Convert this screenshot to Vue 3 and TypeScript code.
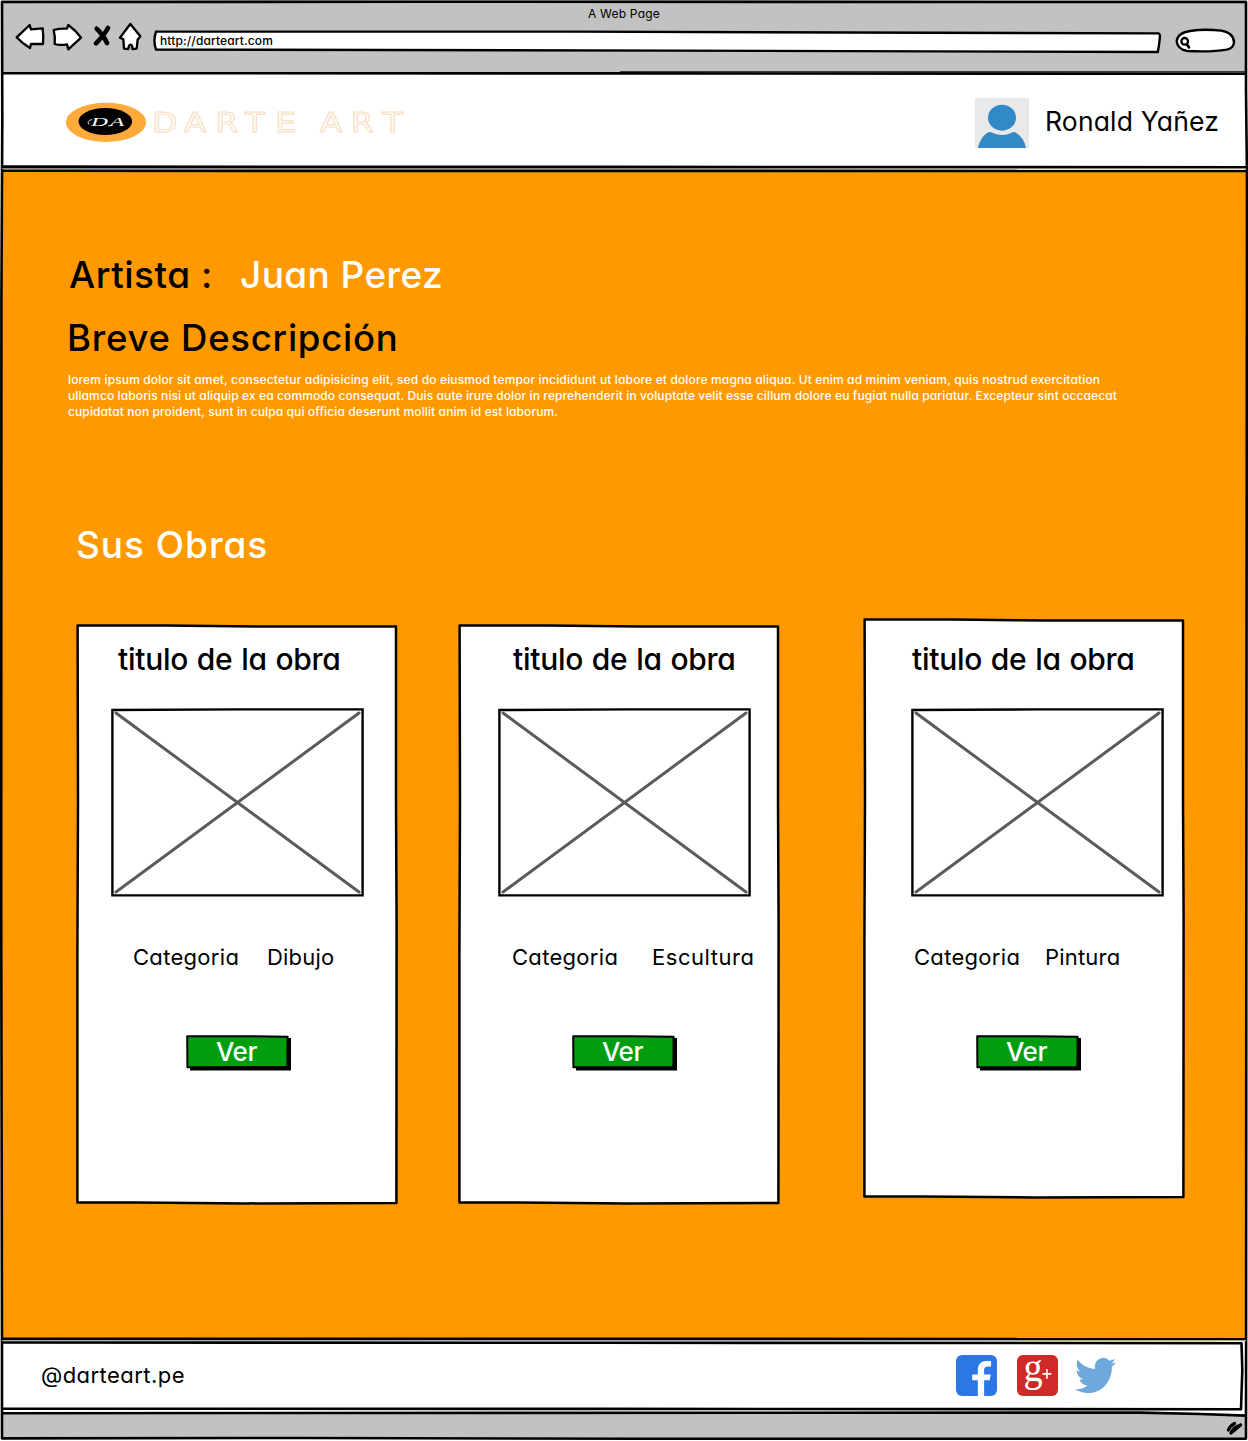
<script setup lang="ts">
interface Work {
  id: string
  title: string
  category: string
}

const user = 'Ronald Yañez'
const artist = 'Juan Perez'

const description: string[] = [
  'lorem ipsum dolor sit amet, consectetur adipisicing elit, sed do eiusmod tempor incididunt ut labore et dolore magna aliqua. Ut enim ad minim veniam, quis nostrud exercitation',
  'ullamco laboris nisi ut aliquip ex ea commodo consequat. Duis aute irure dolor in reprehenderit in voluptate velit esse cillum dolore eu fugiat nulla pariatur. Excepteur sint occaecat',
  'cupidatat non proident, sunt in culpa qui officia deserunt mollit anim id est laborum.',
]

const works: Work[] = [
  { id: 'drawing', title: 'titulo de la obra', category: 'Dibujo' },
  { id: 'sculpture', title: 'titulo de la obra', category: 'Escultura' },
  { id: 'painting', title: 'titulo de la obra', category: 'Pintura' },
]
</script>

<template>
  <div class="window">
    <div class="toolbar">
      <div class="window-title">A Web Page</div>
      <div class="controls">
        <svg class="nav" width="130" height="32" viewBox="0 0 390 96">
          <g fill="#fff" stroke="#000" stroke-width="7" stroke-linejoin="round">
            <path d="M8 46 L47 9 L51 22 L86 19 Q89 43 87 66 L51 66 L48 78 Q26 66 8 46Z" />
            <path d="M119 24 Q137 19 159 20 L163 9 Q185 25 201 47 L163 82 L159 67 Q138 71 122 66 Q124 43 119 24Z" />
            <path d="M349 6 L379 43 L371 53 L368 80 L355 81 Q356 69 350 68 Q344 69 343 81 L330 80 L328 52 L318 47Z" />
          </g>
          <path d="M248 20 Q268 38 279 63 M282 18 Q270 40 246 64" fill="none" stroke="#000" stroke-width="14" stroke-linecap="round" />
        </svg>
        <div class="address">
          <svg class="shape" width="1010" height="24" viewBox="0 0 1010 24">
            <path d="M4 2.6 L420 2.6 L1006.5 4.4 Q1008.5 4.6 1007.6 11 Q1007 17 1005.8 23 L520 21.6 L4 20.6 Q0.8 12 4 2.6Z" fill="#fff" stroke="#000" stroke-width="2.4" />
          </svg>
          <span class="url">http://darteart.com</span>
        </div>
        <svg class="search" width="62" height="28" viewBox="0 0 186 84">
          <path d="M8 43 Q10 18 48 12 Q90 5 142 11 Q180 18 180 46 Q178 64 158 68 Q112 76 40 72 Q10 66 8 43Z" fill="#fff" stroke="#000" stroke-width="7" />
          <circle cx="32" cy="43" r="10" fill="none" stroke="#000" stroke-width="7" />
          <path d="M39 53 L45 61" stroke="#000" stroke-width="8" stroke-linecap="round" />
        </svg>
      </div>
    </div>

    <header class="header">
      <svg class="logo" width="350" height="50" viewBox="60 98 350 50">
        <ellipse cx="106" cy="122.3" rx="40.2" ry="19.6" fill="#ffab3c" />
        <ellipse cx="105.3" cy="121.5" rx="26.8" ry="13.6" fill="#000" />
        <g transform="translate(91 125.5) scale(1.8 1)">
          <text class="monogram" x="0 10.5">DA</text>
        </g>
        <path d="M92 119.5 Q86 121 89 124.5 M108 126 Q111 126 113 123.5" fill="none" stroke="#ddd" />
        <g transform="translate(152 131.5) scale(1.22 1)">
          <text class="wordmark" x="0 26 52 76 101 120 137.5 163 189">DARTE ART</text>
        </g>
      </svg>
      <div class="user">
        <svg width="54" height="50" viewBox="0 0 162 150">
          <rect width="162" height="150" fill="#e9e9e9" />
          <ellipse cx="81" cy="59" rx="42" ry="39" fill="#3289c8" />
          <path d="M9 150 Q16 116 40 103 Q46 101 52 104 Q66 111 81 111 Q96 111 110 104 Q116 100 123 104 Q147 118 153 150Z" fill="#3289c8" />
        </svg>
        <span class="user-name">{{ user }}</span>
      </div>
    </header>

    <main class="content">
      <h1 class="artist"><span class="artist-label">Artista :</span><span class="artist-name">{{ artist }}</span></h1>
      <h2 class="subtitle">Breve Descripción</h2>
      <p class="description">
        <span v-for="line in description" :key="line" class="line">{{ line }}</span>
      </p>
      <h2 class="works-title">Sus Obras</h2>

      <div class="works">
        <article v-for="work in works" :key="work.id" class="card" :class="work.id">
          <svg class="shape" width="322" height="581" viewBox="0 0 322 581">
            <path d="M1.6 1.4 L90 1.6 L180 2.6 L320 2.4 L320 180 L320.6 300 L320.4 579 L170 579.4 L60 578.6 L1.4 578.6 L1.4 330 L2 180Z" fill="#fff" stroke="#000" stroke-width="2.5" stroke-linejoin="round" />
          </svg>
          <h3 class="card-title">{{ work.title }}</h3>
          <svg class="picture" width="253" height="189" viewBox="0 0 253 189">
            <path d="M1.4 2 L130 1.4 L251.6 1.4 L251.6 187.4 L1.4 187.4Z" fill="#fff" stroke="#000" stroke-width="2.4" />
            <path d="M5 5 L248 184 M248 5 L5 184" stroke="#5b5b5b" stroke-width="3" stroke-linecap="round" />
          </svg>
          <div class="category"><span class="category-label">Categoria</span><span class="category-value">{{ work.category }}</span></div>
          <button class="view" type="button">
            <svg class="shape" width="106" height="36" viewBox="0 0 106 36">
              <path d="M4 3 H105 V35.6 H4Z" fill="#000" />
              <path d="M1.2 1.3 L60 1.2 L101.6 1.8 L101.4 32 L1.4 32.3Z" fill="#009e0f" stroke="#000" stroke-width="2" stroke-linejoin="round" />
            </svg>
            <span class="view-label">Ver</span>
          </button>
        </article>
      </div>
    </main>

    <footer class="footer">
      <span class="handle">@darteart.pe</span>
      <div class="social">
        <svg width="41" height="41" viewBox="0 0 124 124">
          <rect width="124" height="124" rx="18" fill="#2b78e4" />
          <path d="M66 124 V76 H49 V59 H66 V46 C66 28 76 18 92 18 H106 V35 H96 C88 35 85 39 85 46 V59 H105 L102 76 H85 V124Z" fill="#fff" />
        </svg>
        <svg class="google" width="41" height="41" viewBox="0 0 124 124">
          <rect width="124" height="124" rx="18" fill="#cf2a27" />
          <g transform="translate(20 78) scale(0.92 1)">
            <text class="google-letter">g</text>
          </g>
          <path d="M77 57 H104 M90.5 42 V72" stroke="#fff" stroke-width="5" />
        </svg>
        <svg class="twitter" width="41" height="35" viewBox="0 2.25 24 19.5" preserveAspectRatio="none">
          <path fill="#6fa8dc" d="M23.953 4.57a10 10 0 01-2.825.775 4.958 4.958 0 002.163-2.723c-.951.555-2.005.959-3.127 1.184a4.92 4.92 0 00-8.384 4.482C7.69 8.095 4.067 6.13 1.64 3.162a4.822 4.822 0 00-.666 2.475c0 1.71.87 3.213 2.188 4.096a4.904 4.904 0 01-2.228-.616v.06a4.923 4.923 0 003.946 4.827 4.996 4.996 0 01-2.212.085 4.936 4.936 0 004.604 3.417 9.867 9.867 0 01-6.102 2.105c-.39 0-.779-.023-1.17-.067a13.995 13.995 0 007.557 2.209c9.053 0 13.998-7.496 13.998-13.985 0-.21 0-.42-.015-.63A9.935 9.935 0 0024 4.59z" />
        </svg>
      </div>
    </footer>

    <div class="statusbar"></div>

    <!-- hand-drawn frame and section rules -->
    <svg class="frame" width="1248" height="1441" viewBox="0 0 1248 1441">
      <path d="M0 1411 H1150 L1245 1414.5 V1410 H0Z" fill="#fff" />
      <g fill="none" stroke="#000" stroke-width="2.6" stroke-linejoin="round">
        <path d="M2 2 L420 1.8 L1246 2 L1246 90 L1247 180 L1246.5 700 L1246 1438.6 L640 1438.8 L300 1438 L2 1438.4 L2 1350 L1.2 900 L1.4 300 L2.3 120Z" />
        <path d="M2 73.2 L620 73.4 L1246 73.8" />
        <path d="M620 71.8 L1246 71.8" stroke-width="1" />
        <path d="M2 166.6 L600 166.9 L1246 167.2" />
        <path d="M2 168.6 H1246" stroke="#888" stroke-width="1.2" />
        <path d="M2 170.8 L1246 171" />
        <path d="M2 1338.8 L1246 1339" />
        <path d="M2 1340.6 H1246" stroke="#aaa" stroke-width="1.2" />
        <path d="M2 1342.5 L600 1342.8 L1241.5 1343.2 L1242.3 1370 L1241 1409.2 L600 1408.9 L2 1408.7" />
        <path d="M2 1413.2 L500 1412.9 L1140 1412.6 L1200 1414 L1246 1415.6" />
      </g>
      <path d="M1228.500 1430 Q1230 1426 1234.500 1423.500 M1231 1433 Q1234 1427 1240.500 1425 M1231 1433 L1240.500 1425" fill="none" stroke="#000" stroke-width="3.400" stroke-linecap="round" />
    </svg>
  </div>
</template>

<style>
body {
  margin: 0;
  background: #fff;
}
</style>

<style scoped>
.window {
  position: relative;
  display: flex;
  flex-direction: column;
  width: 1248px;
  height: 1441px;
  overflow: hidden;
  background: #fff;
  color: #000;
  font-family: Inter, 'Open Sans', sans-serif;
  font-feature-settings: 'cv11' 1;
  white-space: nowrap;
}

h1, h2, h3, p {
  margin: 0;
  font-weight: 400;
}

svg {
  display: block;
  flex: none;
  overflow: visible;
}

.shape {
  position: absolute;
  top: 0;
  left: 0;
}

.frame {
  position: absolute;
  inset: 0;
  pointer-events: none;
}

.toolbar {
  height: 73px;
  margin: 0 1px;
  background: #c2c2c2;
}

.window-title {
  padding-top: 5px;
  text-align: center;
  font-size: 12px;
  line-height: 17px;
  letter-spacing: 0.2px;
}

.controls {
  display: flex;
  padding-left: 13px;
}

.address {
  position: relative;
  width: 1010px;
  height: 24px;
  margin: 7px 0 0 8px;
}

.url {
  position: relative;
  display: block;
  padding-left: 8px;
  font-size: 12px;
  line-height: 24px;
  font-weight: 500;
  letter-spacing: 0.13px;
}

.search {
  margin: 5px 0 0 12px;
}

.header {
  display: flex;
  justify-content: space-between;
  box-sizing: border-box;
  height: 98px;
  padding: 25px 29px 0 60px;
}

.monogram {
  font: italic 400 13px 'Liberation Serif', serif;
  fill: #fff;
}

.wordmark {
  font: 27px 'DejaVu Sans', sans-serif;
  fill: #fffdfa;
  stroke: #f9dcbc;
  stroke-width: 0.9px;
}

.user {
  display: flex;
}

.user-name {
  padding-left: 16px;
  font-size: 26.5px;
  line-height: 47px;
  letter-spacing: 0.16px;
}

.content {
  box-sizing: border-box;
  height: 1168px;
  margin: 0 1px;
  padding-top: 79px;
  background: #ff9900;
}

.artist {
  display: flex;
  height: 49px;
  padding-left: 68px;
  font-size: 37px;
  line-height: 49px;
}

.artist-label {
  width: 171px;
  font-weight: 450;
  letter-spacing: 0.5px;
}

.artist-name {
  color: #fff;
  font-weight: 550;
  letter-spacing: 0.4px;
}

.subtitle {
  margin-top: 15px;
  padding-left: 66px;
  font-size: 36.5px;
  font-weight: 450;
  line-height: 49px;
  letter-spacing: 0.75px;
}

.description {
  margin-top: 9px;
  padding-left: 67px;
  color: #fff;
  font-size: 12px;
  font-weight: 500;
  line-height: 16px;
  letter-spacing: 0.145px;
}

.line {
  display: block;
}

.line + .line {
  letter-spacing: 0.11px;
}

.works-title {
  margin-top: 100px;
  padding-left: 75px;
  color: #fff;
  font-size: 37px;
  font-weight: 500;
  line-height: 49px;
  letter-spacing: 0.95px;
}

.works {
  display: flex;
  align-items: flex-start;
  padding: 49px 0 0 75px;
}

.card {
  position: relative;
  display: flex;
  flex-direction: column;
  align-items: flex-start;
  box-sizing: border-box;
  width: 322px;
  height: 581px;
  margin-top: 6px;
  padding-top: 17px;
}

.sculpture {
  margin-left: 60px;
}

.painting {
  margin: 0 0 0 83px;
  padding-top: 23px;
}

.card-title {
  position: relative;
  margin-left: 42px;
  font-size: 30px;
  font-weight: 450;
  line-height: 37px;
  letter-spacing: -0.27px;
  word-spacing: 1px;
}

.picture {
  position: relative;
  margin: 30px 0 0 35px;
}

.category {
  position: relative;
  display: flex;
  margin: 45px 0 0 57px;
  font-size: 22px;
  line-height: 31px;
  letter-spacing: 0.3px;
}

.category-label {
  width: 134px;
}

.category-value {
  letter-spacing: 0.2px;
}

.view {
  position: relative;
  width: 106px;
  height: 36px;
  margin: 62px 0 0 110px;
  padding: 0;
  border: 0;
  background: none;
  color: #fff;
  font: inherit;
  font-feature-settings: inherit;
}

.view-label {
  position: relative;
  display: block;
  padding: 0 5px 2px 0;
  font-size: 26px;
  font-weight: 550;
  line-height: 34px;
  letter-spacing: -0.4px;
}

.sculpture .card-title { margin-left: 55px; }
.sculpture .picture { margin-left: 40px; }
.sculpture .category { margin-left: 54px; }
.sculpture .category-label { width: 140px; }
.sculpture .category-value { letter-spacing: 0.55px; }
.sculpture .view { margin-left: 114px; }

.painting .card-title { margin-left: 49px; }
.painting .picture { margin-left: 48px; }
.painting .category { margin-left: 51px; }
.painting .category-label { width: 131px; }
.painting .view { margin-left: 113px; }

.footer {
  display: flex;
  box-sizing: border-box;
  height: 73px;
  padding: 16px 132px 0 41px;
}

.handle {
  flex: 1;
  font-size: 22px;
  line-height: 40px;
  letter-spacing: 0.45px;
}

.social {
  display: flex;
}

.google {
  margin-left: 20px;
}

.google-letter {
  font: 126px 'Liberation Serif', serif;
  fill: #fff;
}

.twitter {
  margin: 3px 0 0 17px;
}

.statusbar {
  height: 27px;
  margin: 0 1px;
  background: #c2c2c2;
}
</style>
